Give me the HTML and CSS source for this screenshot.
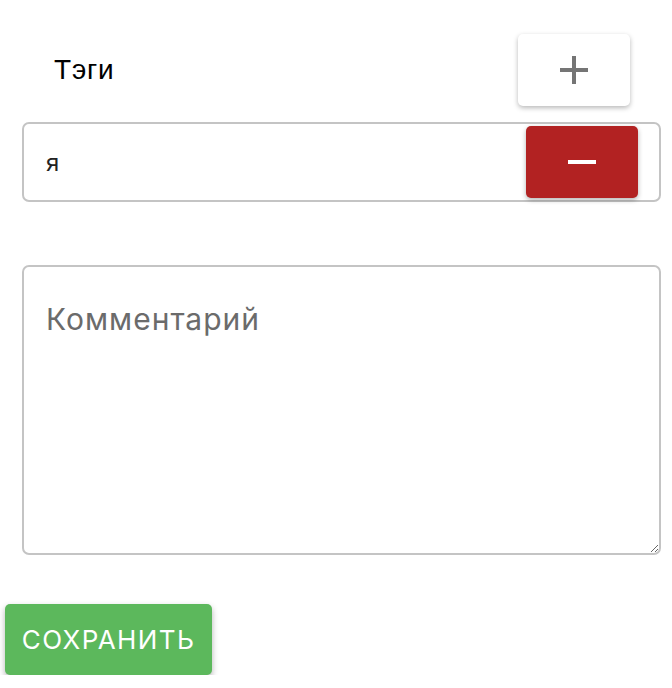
FILE: index.html
```html
<!DOCTYPE html>
<html lang="ru">
<head>
    <meta charset="UTF-8">
    <title>Тэги</title>
    <link rel="stylesheet" href="styles.css">
</head>
<body>
    <div class="form">
        <div class="tags-head">
            <span class="tags-label">Тэги</span>
            <button class="icon-btn add-btn" type="button" aria-label="Добавить">
                <svg width="28" height="28" viewBox="0 0 28 28"><path d="M0 14h28M14 0v28" stroke="#757575" stroke-width="4"/></svg>
            </button>
        </div>

        <div class="tag-row">
            <input class="tag-input" type="text" value="я">
            <button class="icon-btn remove-btn" type="button" aria-label="Удалить">
                <svg width="28" height="4" viewBox="0 0 28 4"><path d="M0 2h28" stroke="#fff" stroke-width="4"/></svg>
            </button>
        </div>

        <textarea class="comment" placeholder="Комментарий"></textarea>

        <button class="save-btn" type="button">Сохранить</button>
    </div>
</body>
</html>
```

FILE: styles.css
```css
body {
    margin: 0;
    padding: 0;
    background: #fff;
    font-family: Inter, 'Liberation Sans', sans-serif;
    color: #000;
}

.form {
    padding: 34px 11px 0 5px;
}

.tags-head {
    display: flex;
    align-items: center;
    justify-content: space-between;
    padding: 0 31px 0 49px;
}

.tags-label {
    font-family: 'Liberation Sans', Arial, sans-serif;
    font-size: 28px;
    letter-spacing: 0.8px;
}

.icon-btn {
    width: 112px;
    height: 72px;
    border: none;
    border-radius: 5px;
    display: flex;
    align-items: center;
    justify-content: center;
    cursor: pointer;
    padding: 0;
}

.add-btn {
    background: #fff;
    box-shadow: 0 2px 5px rgba(0, 0, 0, 0.28);
}

.tag-row {
    margin: 16px 0 0 17px;
    height: 80px;
    box-sizing: border-box;
    border: 2px solid #c4c4c4;
    border-radius: 7px;
    display: flex;
    align-items: center;
    padding: 0 21px 0 22px;
}

.tag-input {
    flex: 1;
    border: none;
    outline: none;
    font-family: Inter, sans-serif;
    font-size: 24px;
    color: #222;
    padding: 0;
    background: transparent;
}

.remove-btn {
    background: #b22222;
    box-shadow: 0 2px 5px rgba(0, 0, 0, 0.3);
}

.comment {
    display: block;
    margin: 63px 0 0 17px;
    width: calc(100% - 17px);
    height: 290px;
    box-sizing: border-box;
    border: 2px solid #c4c4c4;
    border-radius: 7px;
    padding: 34px 22px;
    font-family: Inter, sans-serif;
    font-size: 30px;
    letter-spacing: 1px;
    color: #222;
    resize: vertical;
    outline: none;
}

.comment::placeholder {
    color: #6b6b6b;
}

.save-btn {
    margin-top: 49px;
    width: 207px;
    height: 71px;
    border: none;
    border-radius: 5px;
    background: #5cb85c;
    color: #fff;
    font-family: Inter, sans-serif;
    font-size: 26px;
    letter-spacing: 1.4px;
    text-transform: uppercase;
    box-shadow: 0 3px 6px rgba(0, 0, 0, 0.3);
    cursor: pointer;
}
```
